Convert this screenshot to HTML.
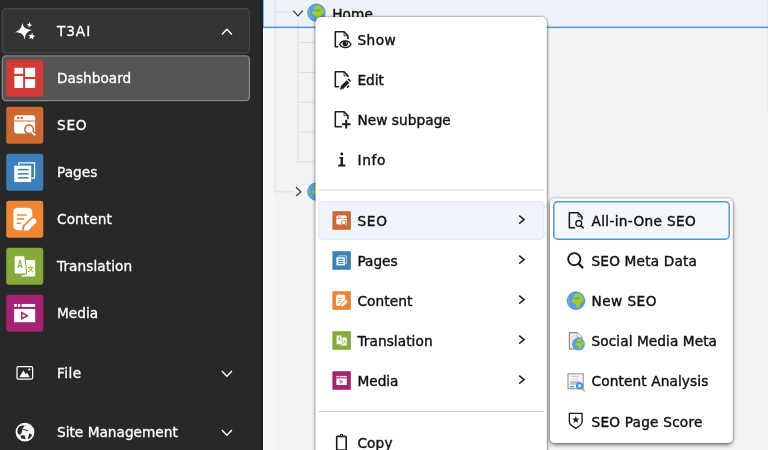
<!DOCTYPE html>
<html lang="en">
<head>
<meta charset="utf-8">
<title>T3AI context menu</title>
<style>
*{box-sizing:border-box;margin:0;padding:0}
html,body{width:768px;height:450px;overflow:hidden;background:#f4f4f4}
body{position:relative;font-family:"DejaVu Sans","Liberation Sans",sans-serif;font-size:13.7px;color:#111}
svg.layer{position:absolute;left:0;top:0;width:768px;height:450px;overflow:hidden;will-change:transform}
.menu{position:absolute;background:#fff;border-radius:5px;box-shadow:0 1px 5px rgba(0,0,0,.36),0 0 1.500px rgba(0,0,0,.4)}
.t{position:absolute;white-space:nowrap;line-height:20px;height:20px;will-change:transform}
.w{color:#fff;-webkit-text-stroke:.3px #fff}
.k{color:#111;-webkit-text-stroke:.4px #111}
</style>
</head>
<body>

<svg class="layer" viewBox="0 0 768 450">
<rect x="263" y="0" width="505" height="450" fill="#f4f4f4"/>
<rect x="263" y="27" width="11.500" height="423" fill="#f7f7f7"/>
<rect x="263" y="0" width="505" height="26.800" fill="#edf2f9"/>
<path d="M275 0L275 191.8" stroke="#dedede" stroke-width="1" fill="none"/>
<path d="M275 12.2L293 12.2" stroke="#dedede" stroke-width="1" fill="none"/>
<path d="M275 191.8L294.5 191.8" stroke="#dedede" stroke-width="1" fill="none"/>
<path d="M297.9 22L297.9 162" stroke="#dedede" stroke-width="1" fill="none"/>
<path d="M297.9 42.5L318 42.5" stroke="#dedede" stroke-width="1" fill="none"/>
<path d="M297.9 72.4L318 72.4" stroke="#dedede" stroke-width="1" fill="none"/>
<path d="M297.9 102.2L318 102.2" stroke="#dedede" stroke-width="1" fill="none"/>
<path d="M297.9 132.1L318 132.1" stroke="#dedede" stroke-width="1" fill="none"/>
<path d="M297.9 161.9L318 161.9" stroke="#dedede" stroke-width="1" fill="none"/>
<rect x="263" y="26.600" width="505" height="1.500" fill="#4a97e2"/>
<rect x="766.600" y="0" width="1.400" height="113" fill="#000" fill-opacity=".035"/>
<rect x="263" y="0" width="1" height="27.500" fill="#4a97e2" fill-opacity=".7"/>
<path d="M293.20 10.70L298.00 15.90L302.80 10.70" fill="none" stroke="#333" stroke-width="1.2"/>
<g transform="translate(306.509 2.809) scale(0.9891)"><circle cx="10" cy="10" r="8.850" fill="#4d9df3" stroke="#3f88e0" stroke-width=".8"/><path fill="#a8cc18" stroke="#a8cc18" stroke-width=".5" stroke-linejoin="round" d="M8.400 4.100L10.300 3.050L13.500 3.300L15.600 5.200L17 7.600L17.500 10L15.900 11.100L14.500 13.200L13.200 15.600L12.100 17.200L10.800 17.300L10.200 15.600L10 13.200L8.700 12.500L6.800 11.900L5.900 10.300L6.400 8.900L7.900 8.400L10.800 8.750L14 8.600L14.300 7.400L12.400 6.600L9.500 6.600L7.600 7.100L7.300 6z"/><path fill="#a8cc18" d="M2.500 6.600c.3-.4.800-.2.800.3l-.1 1.400c0 .5-.5.600-.7.200-.2-.6-.2-1.300 0-1.900zM1.900 9.200c.3-.3.800-.1.800.4 0 1 .2 2.100.5 3.100.1.500-.4.600-.7.200-.5-1.100-.8-2.500-.6-3.700zM3.400 13.600c.4-.2.900 0 1.100.4l.5 1.300c.1.500-.3.700-.7.400-.6-.5-1-1.300-.9-2.100zM5.300 3.900c.4-.4 1-.5 1.400-.4.300.2 0 .5-.3.600l-.8.300c-.4.100-.5-.2-.3-.5z"/></g>
<path d="M296.00 187.30L300.80 191.70L296.00 196.10" fill="none" stroke="#333" stroke-width="1.2"/>
<g transform="translate(306.509 181.709) scale(0.9891)"><circle cx="10" cy="10" r="8.850" fill="#4d9df3" stroke="#3f88e0" stroke-width=".8"/><path fill="#a8cc18" stroke="#a8cc18" stroke-width=".5" stroke-linejoin="round" d="M8.400 4.100L10.300 3.050L13.500 3.300L15.600 5.200L17 7.600L17.500 10L15.900 11.100L14.500 13.200L13.200 15.600L12.100 17.200L10.800 17.300L10.200 15.600L10 13.200L8.700 12.500L6.800 11.900L5.900 10.300L6.400 8.900L7.900 8.400L10.800 8.750L14 8.600L14.300 7.400L12.400 6.600L9.500 6.600L7.600 7.100L7.300 6z"/><path fill="#a8cc18" d="M2.500 6.600c.3-.4.800-.2.800.3l-.1 1.400c0 .5-.5.600-.7.200-.2-.6-.2-1.300 0-1.900zM1.900 9.200c.3-.3.800-.1.800.4 0 1 .2 2.100.5 3.100.1.500-.4.600-.7.200-.5-1.100-.8-2.500-.6-3.700zM3.400 13.600c.4-.2.900 0 1.100.4l.5 1.300c.1.500-.3.700-.7.400-.6-.5-1-1.300-.9-2.100zM5.300 3.900c.4-.4 1-.5 1.400-.4.300.2 0 .5-.3.600l-.8.300c-.4.100-.5-.2-.3-.5z"/></g>
<rect x="0" y="0" width="263" height="450" fill="#282828"/>
<rect x="260.400" y="0" width="2.600" height="450" fill="#232323"/>
<rect x="2.400" y="8.650" width="247" height="44.500" rx="3.600" fill="#333" stroke="#464646" stroke-width="1.300"/>
<rect x="2.400" y="55.950" width="247" height="44.700" rx="3.600" fill="#555" stroke="#878787" stroke-width="1.300"/>
<g transform="translate(4 8)"><path fill="#fff" d="M18.200 14.400c.9 4.600 3 6.700 10.400 7.700-6 1.400-7.400 3.900-7.700 10-1.300-5.800-3.500-7.900-10.500-7.800 5.400-1.900 7.300-4.300 7.800-9.900z"/><polygon fill="#fff" points="25.80,14.04 26.28,16.21 28.16,17.40 25.99,17.88 24.80,19.76 24.32,17.59 22.44,16.40 24.61,15.92"/><polygon fill="#fff" points="28.34,24.76 28.85,27.29 31.36,27.89 29.11,29.15 29.32,31.73 27.42,29.98 25.04,30.97 26.12,28.62 24.43,26.66 27.00,26.96"/></g>
<path d="M221.90 34.50L226.90 29.30L231.90 34.50" fill="none" stroke="#fff" stroke-width="1.45"/>
<g transform="translate(6.250 59.700) scale(1.15625)"><rect width="32" height="32" rx="2.3" fill="#d43b36"/><g fill="#fff"><rect x="7" y="7" width="7.600" height="5.200"/><rect x="7" y="14.100" width="7.600" height="10.400"/><rect x="16.300" y="7" width="8.700" height="7.900"/><rect x="16.300" y="16.800" width="8.700" height="7.700"/></g></g>
<g transform="translate(6.250 106.700) scale(1.15625)"><rect width="32" height="32" rx="2.3" fill="#cd6931"/><path fill="#fff" d="M9.500 7.300h12.800a2.700 2.700 0 0 1 2.700 2.700v1.900H6.800V10a2.700 2.700 0 0 1 2.700-2.700z"/><path fill="#fff" d="M6.800 12.900H25v7.500a2.700 2.700 0 0 1-2.700 2.700H9.500a2.700 2.700 0 0 1-2.700-2.700z"/><circle cx="10.300" cy="9.700" r="1.100" fill="#cd6931"/><circle cx="13.400" cy="9.700" r="1.100" fill="#cd6931"/><path d="M22 21.800l2.700 2.700" stroke="#cd6931" stroke-width="3.600" stroke-linecap="round"/><circle cx="19.800" cy="19.600" r="4.400" fill="#cd6931"/><path d="M22.200 22l2.400 2.400" stroke="#fff" stroke-width="1.500" stroke-linecap="round"/><circle cx="19.800" cy="19.600" r="3" fill="#fff"/></g>
<g transform="translate(6.250 153.700) scale(1.15625)"><rect width="32" height="32" rx="2.3" fill="#3c7fba"/><path fill="none" stroke="#fff" stroke-width="1.100" d="M10.900 10V7.850h13.550V21.100H22"/><rect x="6.900" y="10.300" width="14.700" height="14.200" fill="#fff"/><g fill="#3c7fba"><rect x="10" y="13.1" width="9.300" height="1.3"/><rect x="10" y="16.8" width="9.300" height="1.3"/><rect x="10" y="20.200000000000003" width="9.300" height="1.3"/></g></g>
<g transform="translate(6.250 200.700) scale(1.15625)"><rect width="32" height="32" rx="2.3" fill="#ef8633"/><rect x="6.200" y="6.100" width="16.300" height="19.500" rx="3.600" fill="#fff"/><g stroke="#ef8633" stroke-width="1.300" stroke-linecap="round"><path d="M9.600 12.300h7.500M9.600 15.900h5.500M9.600 19.500h2.600"/></g><path d="M17.400 23.800L23.700 17.800" stroke="#ef8633" stroke-width="7.600" stroke-linecap="round"/><path d="M15.200 26.100l1.300-4.200 3.200 3.200z" fill="#ef8633" stroke="#ef8633" stroke-width="2.200" stroke-linejoin="round"/><path d="M18 23.300L23.700 17.800" stroke="#fff" stroke-width="4.800" stroke-linecap="round"/><path d="M15.400 25.900l1.200-4 3.100 3z" fill="#fff" stroke="#fff" stroke-width=".4" stroke-linejoin="round"/></g>
<g transform="translate(6.250 247.700) scale(1.15625)"><rect width="32" height="32" rx="2.3" fill="#85aa38"/><path fill="#fff" d="M17.200 10.600h6.800a1 1 0 0 1 1 1v12.300a1 1 0 0 1-1 1H14l2.200-1.800z"/><path fill="#fff" d="M13.300 23.600l2.200 .2 -1.800 1.800z"/><path fill="#fff" stroke="#85aa38" stroke-width="0.900" d="M7.800 6.900h7.300a1 1 0 0 1 1 .9l1.500 13.900a1 1 0 0 1-1 1.100H7.800a1 1 0 0 1-1-1V7.900a1 1 0 0 1 1-1z"/><text transform="translate(11.900 17.300) scale(.74 1)" font-family="Liberation Sans,sans-serif" font-weight="bold" font-size="8.700" text-anchor="middle" fill="#85aa38">A</text><text x="21.100" y="19.900" font-family="Noto Sans CJK SC,Liberation Sans,sans-serif" font-weight="bold" font-size="5.400" text-anchor="middle" fill="#85aa38">文</text></g>
<g transform="translate(6.250 294.700) scale(1.15625)"><rect width="32" height="32" rx="2.3" fill="#a72272"/><g fill="#fff"><rect x="6.800" y="8" width="2.400" height="2.500"/><rect x="10.100" y="8" width="2" height="2.500"/><rect x="13.300" y="8" width="11.700" height="2.500"/><rect x="6.800" y="12.300" width="18.200" height="11.500"/></g><path d="M13.400 15.400v5.400l4.800-2.700z" fill="#fff" stroke="#a72272" stroke-width="1.300" stroke-linejoin="miter"/></g>
<g transform="translate(14 363)"><rect x="3" y="3.500" width="15.600" height="12.600" rx="1.400" fill="none" stroke="#fff" stroke-width="1.250"/><path fill="#fff" d="M5.300 14.200l4.100-6.700 2.300 3.800 1.300-1.500 2.800 4.400z"/><circle cx="15.300" cy="6.500" r="1.100" fill="#fff"/></g>
<path d="M221.90 371.10L226.90 376.30L231.90 371.10" fill="none" stroke="#fff" stroke-width="1.45"/>
<g transform="translate(14 421)"><circle cx="11" cy="11.100" r="8.700" fill="#f4f4f4"/><path fill="#2b2b2b" d="M3.600 5.400l6.800-1.200-1.900 4-.9 3.500-1.500 2.400-2.300-1.600-.6-3.700z"/><path fill="#2b2b2b" d="M6.600 14.500l3.900-.3 1.300 4-4.700-.7z"/><path fill="#2b2b2b" d="M15.400 12.200l2.900 1.900-2.900 4.200-1.600-.8z"/><path d="M9.500 8.500l4.100 1.100" stroke="#2b2b2b" stroke-width="1" stroke-linecap="round"/><path fill="#cfcfcf" d="M10.500 4.200l3 .3-1.500 1.500z"/><circle cx="11" cy="11.100" r="8.750" fill="none" stroke="#fff" stroke-width="1.350"/></g>
<path d="M221.90 430.10L226.90 435.30L231.90 430.10" fill="none" stroke="#fff" stroke-width="1.45"/>
</svg>
<div class="t k" style="left:332px;top:4px;letter-spacing:0.1px;transform:translateX(0.2px)">Home</div>
<div class="t w" style="left:57px;top:21px;letter-spacing:0.9px">T3AI</div>
<div class="t w" style="left:57px;top:68px">Dashboard</div>
<div class="t w" style="left:57px;top:115px;letter-spacing:0.7px">SEO</div>
<div class="t w" style="left:57px;top:162px">Pages</div>
<div class="t w" style="left:57px;top:209px;letter-spacing:0.07px">Content</div>
<div class="t w" style="left:57px;top:256px;letter-spacing:0.06px">Translation</div>
<div class="t w" style="left:57px;top:303px">Media</div>
<div class="t w" style="left:57px;top:363px;letter-spacing:0.4px">File</div>
<div class="t w" style="left:57px;top:422px">Site Management</div>
<svg class="layer" viewBox="0 0 768 450">
<defs><filter id="sh" x="-10%" y="-10%" width="120%" height="125%"><feGaussianBlur in="SourceAlpha" stdDeviation="1.200" result="b1"/><feComponentTransfer in="b1" result="s1"><feFuncA type="linear" slope=".5"/></feComponentTransfer><feGaussianBlur in="SourceAlpha" stdDeviation="2.200" result="b2"/><feOffset in="b2" dy="2" result="o2"/><feComponentTransfer in="o2" result="s2"><feFuncA type="linear" slope=".48"/></feComponentTransfer><feMerge><feMergeNode in="s2"/><feMergeNode in="s1"/><feMergeNode in="SourceGraphic"/></feMerge></filter></defs>
<rect x="315.700" y="17.100" width="231" height="460" rx="5.500" fill="#fff" filter="url(#sh)"/>
<rect x="550" y="198.500" width="182.700" height="244.500" rx="4.700" fill="#fff" filter="url(#sh)"/>
<rect x="318.800" y="201.700" width="225.200" height="37.500" rx="3.500" fill="#f0f5fc" stroke="#d9e6f7" stroke-width="1"/>
<rect x="318.500" y="189.550" width="225.500" height=".95" fill="#cdcdcd"/>
<rect x="318.500" y="411.050" width="225.500" height=".95" fill="#cdcdcd"/>
<g transform="translate(332.450 30.125) scale(1.14688)"><path fill="none" stroke="#1a1a1a" stroke-width="1.350" stroke-linejoin="round" d="M5 14.500H2.500V1.500h7.600l3.400 3.400V8"/><path fill="none" stroke="#1a1a1a" stroke-width="0.700" d="M10.100 1.800v3.100h3.200"/><path d="M6.300 12.300C8 8.400 14.400 8.400 16.100 12.300C14.400 16.200 8 16.200 6.300 12.300z" fill="#fff" stroke="#1a1a1a" stroke-width="1.250" stroke-linejoin="round"/><circle cx="11.200" cy="11.700" r="2.350" fill="#1a1a1a"/><circle cx="12" cy="10.900" r="0.550" fill="#fff"/></g>
<g transform="translate(332.450 70.125) scale(1.14688)"><path fill="none" stroke="#1a1a1a" stroke-width="1.350" stroke-linejoin="round" d="M5.6 14.500H2.500V1.500h7.600l3.400 3.400V6.1"/><path fill="none" stroke="#1a1a1a" stroke-width="0.700" d="M10.100 1.800v3.100h3.200"/><g transform="translate(.2 .7)"><path d="M8.600 14.100l4.800-4.800" stroke="#1a1a1a" stroke-width="3.100"/><path d="M6.500 16.200l1-3.300 2.300 2.300z" fill="#1a1a1a" stroke="#1a1a1a" stroke-width=".3" stroke-linejoin="round"/><path d="M14.100 8.600l.95-.95" stroke="#1a1a1a" stroke-width="3.100"/><path d="M12.900 14.100l.9-.9" stroke="#1a1a1a" stroke-width="1.300" stroke-linecap="round"/></g></g>
<g transform="translate(332.450 110.125) scale(1.14688)"><path fill="none" stroke="#1a1a1a" stroke-width="1.350" stroke-linejoin="round" d="M8.2 14.500H2.500V1.500h7.600l3.400 3.400V8"/><path fill="none" stroke="#1a1a1a" stroke-width="0.700" d="M10.100 1.800v3.100h3.200"/><path d="M8.200 12.300h7.600M12 8.500v7.600" stroke="#1a1a1a" stroke-width="1.750" fill="none"/></g>
<g transform="translate(332.450 150.125) scale(1.14688)"><path fill="#1a1a1a" d="M9.150 12.600V6H6.100v1.400h0.950v5.200H5.100v1.750h6.150v-1.750z"/><circle cx="8.100" cy="3.450" r="1.300" fill="#1a1a1a"/></g>
<g transform="translate(332.450 432.925) scale(1.14688)"><rect x="3.700" y="3" width="8.300" height="12" rx=".9" fill="none" stroke="#1a1a1a" stroke-width="1.400"/><circle cx="7.900" cy="2.300" r="1" fill="#fff" stroke="#1a1a1a" stroke-width="1"/></g>
<g transform="translate(332.450 211.325) scale(0.57344)"><rect width="32" height="32" rx="0.6" fill="#cd6931"/><rect x=".5" y=".5" width="31" height="31" rx="0.6" fill="none" stroke="#000" stroke-opacity=".1" stroke-width="1"/><path fill="#fff" d="M9.500 7.300h12.800a2.700 2.700 0 0 1 2.700 2.700v1.900H6.800V10a2.700 2.700 0 0 1 2.700-2.700z"/><path fill="#fff" d="M6.800 12.900H25v7.500a2.700 2.700 0 0 1-2.700 2.700H9.500a2.700 2.700 0 0 1-2.700-2.700z"/><circle cx="10.300" cy="9.700" r="1.100" fill="#cd6931"/><circle cx="13.400" cy="9.700" r="1.100" fill="#cd6931"/><path d="M22 21.800l2.700 2.700" stroke="#cd6931" stroke-width="3.600" stroke-linecap="round"/><circle cx="19.800" cy="19.600" r="4.400" fill="#cd6931"/><path d="M22.200 22l2.400 2.400" stroke="#fff" stroke-width="1.500" stroke-linecap="round"/><circle cx="19.800" cy="19.600" r="3" fill="#fff"/></g>
<path d="M519.20 215.60L524.00 219.60L519.20 223.60" fill="none" stroke="#222" stroke-width="1.55"/>
<g transform="translate(332.450 251.325) scale(0.57344)"><rect width="32" height="32" rx="0.6" fill="#3c7fba"/><rect x=".5" y=".5" width="31" height="31" rx="0.6" fill="none" stroke="#000" stroke-opacity=".1" stroke-width="1"/><path fill="none" stroke="#fff" stroke-width="1.100" d="M10.900 10V7.850h13.550V21.100H22"/><rect x="6.900" y="10.300" width="14.700" height="14.200" fill="#fff"/><g fill="#3c7fba"><rect x="10" y="12.8" width="9.300" height="1.9"/><rect x="10" y="16.5" width="9.300" height="1.9"/><rect x="10" y="19.900000000000002" width="9.300" height="1.9"/></g></g>
<path d="M519.20 255.60L524.00 259.60L519.20 263.60" fill="none" stroke="#222" stroke-width="1.55"/>
<g transform="translate(332.450 291.325) scale(0.57344)"><rect width="32" height="32" rx="0.6" fill="#ef8633"/><rect x=".5" y=".5" width="31" height="31" rx="0.6" fill="none" stroke="#000" stroke-opacity=".1" stroke-width="1"/><rect x="6.200" y="6.100" width="16.300" height="19.500" rx="3.600" fill="#fff"/><g stroke="#ef8633" stroke-width="1.300" stroke-linecap="round"><path d="M9.600 12.300h7.500M9.600 15.900h5.500M9.600 19.500h2.600"/></g><path d="M17.400 23.800L23.700 17.800" stroke="#ef8633" stroke-width="7.600" stroke-linecap="round"/><path d="M15.200 26.100l1.300-4.200 3.200 3.200z" fill="#ef8633" stroke="#ef8633" stroke-width="2.200" stroke-linejoin="round"/><path d="M18 23.300L23.700 17.800" stroke="#fff" stroke-width="4.800" stroke-linecap="round"/><path d="M15.400 25.900l1.200-4 3.100 3z" fill="#fff" stroke="#fff" stroke-width=".4" stroke-linejoin="round"/></g>
<path d="M519.20 295.60L524.00 299.60L519.20 303.60" fill="none" stroke="#222" stroke-width="1.55"/>
<g transform="translate(332.450 331.325) scale(0.57344)"><rect width="32" height="32" rx="0.6" fill="#85aa38"/><rect x=".5" y=".5" width="31" height="31" rx="0.6" fill="none" stroke="#000" stroke-opacity=".1" stroke-width="1"/><path fill="#fff" d="M17.200 10.600h6.800a1 1 0 0 1 1 1v12.300a1 1 0 0 1-1 1H14l2.200-1.800z"/><path fill="#fff" d="M13.300 23.600l2.200 .2 -1.800 1.800z"/><path fill="#fff" stroke="#85aa38" stroke-width="0.900" d="M7.800 6.900h7.300a1 1 0 0 1 1 .9l1.500 13.900a1 1 0 0 1-1 1.100H7.800a1 1 0 0 1-1-1V7.900a1 1 0 0 1 1-1z"/><text transform="translate(11.900 17.300) scale(.74 1)" font-family="Liberation Sans,sans-serif" font-weight="bold" font-size="8.700" text-anchor="middle" fill="#85aa38">A</text><text x="21.100" y="19.900" font-family="Noto Sans CJK SC,Liberation Sans,sans-serif" font-weight="bold" font-size="5.400" text-anchor="middle" fill="#85aa38">文</text></g>
<path d="M519.20 335.60L524.00 339.60L519.20 343.60" fill="none" stroke="#222" stroke-width="1.55"/>
<g transform="translate(332.450 371.325) scale(0.57344)"><rect width="32" height="32" rx="0.6" fill="#a72272"/><rect x=".5" y=".5" width="31" height="31" rx="0.6" fill="none" stroke="#000" stroke-opacity=".1" stroke-width="1"/><g fill="#fff"><rect x="6.800" y="8" width="2.400" height="2.500"/><rect x="10.100" y="8" width="2" height="2.500"/><rect x="13.300" y="8" width="11.700" height="2.500"/><rect x="6.800" y="12.300" width="18.200" height="11.500"/></g><path d="M13.400 15.400v5.400l4.800-2.700z" fill="#fff" stroke="#a72272" stroke-width="1.300" stroke-linejoin="miter"/></g>
<path d="M519.20 375.60L524.00 379.60L519.20 383.60" fill="none" stroke="#222" stroke-width="1.55"/>
<rect x="553.750" y="201.750" width="175.500" height="37.500" rx="4" fill="#f4f8fd" stroke="#4a97e2" stroke-width="1.500"/>
<g transform="translate(566.500 211.125) scale(1.14688)"><path fill="none" stroke="#1a1a1a" stroke-width="1.350" stroke-linejoin="round" d="M7.6 14.500H2.500V1.500h7.600l3.400 3.400V7.5"/><path fill="none" stroke="#1a1a1a" stroke-width="0.700" d="M10.100 1.800v3.100h3.200"/><circle cx="10.700" cy="10.700" r="2.550" fill="none" stroke="#1a1a1a" stroke-width="1.150"/><path d="M12.600 12.600l2 2" stroke="#1a1a1a" stroke-width="1.300" stroke-linecap="round"/></g>
<g transform="translate(566.500 251.125) scale(1.14688)"><circle cx="6.800" cy="7" r="5.300" fill="none" stroke="#1a1a1a" stroke-width="1.600"/><path d="M10.700 11l3.100 3.200" stroke="#1a1a1a" stroke-width="2" stroke-linecap="round"/></g>
<g transform="translate(566.500 291.125) scale(1.14688)"><g transform="translate(-0.446 -0.396) scale(0.8696)"><circle cx="10" cy="10" r="8.850" fill="#4d9df3" stroke="#3f88e0" stroke-width=".8"/><path fill="#a8cc18" stroke="#a8cc18" stroke-width=".5" stroke-linejoin="round" d="M8.400 4.100L10.300 3.050L13.500 3.300L15.600 5.200L17 7.600L17.500 10L15.900 11.100L14.500 13.200L13.200 15.600L12.100 17.200L10.800 17.300L10.200 15.600L10 13.200L8.700 12.500L6.800 11.900L5.900 10.300L6.400 8.900L7.900 8.400L10.800 8.750L14 8.600L14.300 7.400L12.400 6.600L9.500 6.600L7.600 7.100L7.300 6z"/><path fill="#a8cc18" d="M2.500 6.600c.3-.4.800-.2.800.3l-.1 1.400c0 .5-.5.600-.7.200-.2-.6-.2-1.300 0-1.900zM1.900 9.200c.3-.3.800-.1.800.4 0 1 .2 2.100.5 3.100.1.500-.4.600-.7.200-.5-1.100-.8-2.500-.6-3.700zM3.400 13.600c.4-.2.900 0 1.100.4l.5 1.300c.1.500-.3.700-.7.400-.6-.5-1-1.300-.9-2.100zM5.300 3.900c.4-.4 1-.5 1.400-.4.300.2 0 .5-.3.600l-.8.300c-.4.100-.5-.2-.3-.5z"/></g></g>
<g transform="translate(566.500 331.125) scale(1.14688)"><path d="M2.500 1.300h6.800l4.200 4.200v10H2.500z" fill="#eee" stroke="#858585" stroke-width=".95"/><path d="M9.300 1.300v4.200h4.200" fill="#fff" stroke="#9a9a9a" stroke-width=".7"/><path d="M4 3v11M5.200 3v11M6.400 3v11M7.600 3v11" stroke="#e2e2e2" stroke-width=".5"/><g transform="translate(4.472 5.322) scale(0.5978)"><circle cx="10" cy="10" r="8.850" fill="#4d9df3" stroke="#3f88e0" stroke-width=".8"/><path fill="#a8cc18" stroke="#a8cc18" stroke-width=".5" stroke-linejoin="round" d="M8.400 4.100L10.300 3.050L13.500 3.300L15.600 5.200L17 7.600L17.500 10L15.900 11.100L14.500 13.200L13.200 15.600L12.100 17.200L10.800 17.300L10.200 15.600L10 13.200L8.700 12.500L6.800 11.900L5.900 10.300L6.400 8.900L7.900 8.400L10.800 8.750L14 8.600L14.300 7.400L12.400 6.600L9.500 6.600L7.600 7.100L7.300 6z"/><path fill="#a8cc18" d="M2.500 6.600c.3-.4.800-.2.800.3l-.1 1.400c0 .5-.5.600-.7.200-.2-.6-.2-1.300 0-1.900zM1.900 9.200c.3-.3.800-.1.800.4 0 1 .2 2.100.5 3.100.1.500-.4.600-.7.200-.5-1.100-.8-2.500-.6-3.700zM3.400 13.600c.4-.2.900 0 1.100.4l.5 1.300c.1.500-.3.700-.7.400-.6-.5-1-1.300-.9-2.100zM5.300 3.900c.4-.4 1-.5 1.400-.4.300.2 0 .5-.3.600l-.8.300c-.4.100-.5-.2-.3-.5z"/></g></g>
<g transform="translate(566.500 371.625) scale(1.14688)"><rect x="1.300" y="1.900" width="13.300" height="12.900" fill="#f7f7f7" stroke="#9a9a9a" stroke-width="1"/><rect x="3.300" y="3.700" width="7.600" height="1" fill="#cfcfcf"/><rect x="3.300" y="5.900" width="7.600" height="1" fill="#dcdcdc"/><rect x="3.200" y="8" width="8.800" height="3.400" fill="#c2c2c2"/><rect x="3" y="12.500" width="3.700" height="1.200" fill="#4d9df2"/><path d="M13 14.200l2.500 2.500" stroke="#f09a2c" stroke-width="1.400" stroke-linecap="round"/><circle cx="11.400" cy="12.400" r="2.500" fill="#9ccbff" stroke="#3b8cf0" stroke-width="1.300"/><circle cx="11.400" cy="12.400" r="1" fill="#d5e9ff"/></g>
<g transform="translate(566.500 411.825) scale(1.14688)"><g transform="translate(0.000 -0.900) scale(1.00000)"><path d="M2.500 2.200h11.100v7.400c0 2.200-2.500 4.100-5.500 5.700-3-1.600-5.600-3.500-5.600-5.700z" fill="none" stroke="#1a1a1a" stroke-width="1.150" stroke-linejoin="round"/><polygon points="8.05,4.60 8.84,6.81 11.19,6.88 9.33,8.32 9.99,10.57 8.05,9.25 6.11,10.57 6.77,8.32 4.91,6.88 7.26,6.81" fill="#1a1a1a"/></g></g>
</svg>
<div class="t k" style="left:357px;top:30px;letter-spacing:0.45px;transform:translateX(0.4px)">Show</div>
<div class="t k" style="left:357px;top:70px;transform:translateX(0.4px)">Edit</div>
<div class="t k" style="left:357px;top:110px;letter-spacing:0.05px;transform:translateX(0.4px)">New subpage</div>
<div class="t k" style="left:357px;top:150px;letter-spacing:0.7px;transform:translateX(0.4px)">Info</div>
<div class="t k" style="left:357px;top:433px;letter-spacing:0.12px;transform:translateX(0.4px)">Copy</div>
<div class="t k" style="left:357px;top:211px;letter-spacing:0.7px;transform:translateX(0.4px)">SEO</div>
<div class="t k" style="left:357px;top:251px;transform:translateX(0.4px)">Pages</div>
<div class="t k" style="left:357px;top:291px;letter-spacing:0.07px;transform:translateX(0.4px)">Content</div>
<div class="t k" style="left:357px;top:331px;letter-spacing:0.06px;transform:translateX(0.4px)">Translation</div>
<div class="t k" style="left:357px;top:371px;transform:translateX(0.4px)">Media</div>
<div class="t k" style="left:591px;top:211px;letter-spacing:0.32px;transform:translateX(0.5px)">All-in-One SEO</div>
<div class="t k" style="left:591px;top:251px;letter-spacing:0.16px;transform:translateX(0.5px)">SEO Meta Data</div>
<div class="t k" style="left:591px;top:291px;letter-spacing:0.44px;transform:translateX(0.5px)">New SEO</div>
<div class="t k" style="left:591px;top:331px;letter-spacing:0.07px;transform:translateX(0.5px)">Social Media Meta</div>
<div class="t k" style="left:591px;top:371px;letter-spacing:0.11px;transform:translateX(0.5px)">Content Analysis</div>
<div class="t k" style="left:591px;top:412px;letter-spacing:0.2px;transform:translateX(0.5px)">SEO Page Score</div>
</body>
</html>
